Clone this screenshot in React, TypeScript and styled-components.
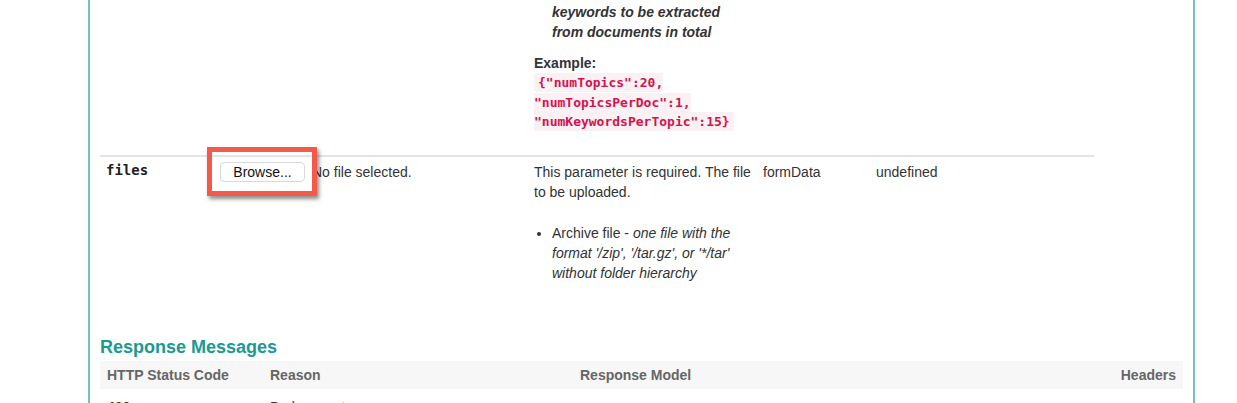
import React from 'react';
import styled, { createGlobalStyle } from 'styled-components';

const GlobalStyle = createGlobalStyle`
  html, body {
    margin: 0;
    padding: 0;
    overflow: hidden;
    background: #fff;
  }
  body {
    font-family: "Liberation Sans", Arial, Helvetica, sans-serif;
    font-size: 14px;
    line-height: 20px;
    color: #333;
  }
`;

const Operation = styled.div`
  margin-left: 88px;
  width: 1083px;
  min-height: 460px;
  border-left: 2px solid #72c3c0;
  border-right: 2px solid #72c3c0;
  padding: 2px 10px 0 10px;
`;

const ParamTable = styled.div`
  width: 994px;
`;

const ParamRow = styled.div<{ $divider?: boolean; $padTop: number; $padBottom: number }>`
  display: grid;
  grid-template-columns: 114px 314px 229px 113px 224px;
  align-items: start;
  padding: ${p => p.$padTop}px 0 ${p => p.$padBottom}px;
  border-top: ${p => (p.$divider ? '2px solid #e4e4e4' : 'none')};
`;

const Cell = styled.div`
  padding: 0 6px;
  min-width: 0;
`;

const ParamName = styled(Cell)`
  font-family: "DejaVu Sans Mono", Menlo, monospace;
  font-weight: bold;
  font-size: 14px;
  line-height: 16px;
  color: #222;
`;

const ListTail = styled.div`
  padding-left: 18px;
  font-weight: bold;
  font-style: italic;
`;

const ExampleLabel = styled.div`
  margin-top: 11px;
  font-weight: bold;
`;

const CodeBlock = styled.div`
  line-height: 18.5px;
`;

const Code = styled.code`
  font-family: "DejaVu Sans Mono", Menlo, monospace;
  font-size: 13px;
  font-weight: bold;
  color: #d3134d;
  background: #f9f1f3;
  padding: 2px 4px;
  border-radius: 3px;
`;

const FileField = styled.div`
  display: flex;
  align-items: center;
  gap: 7px;
  padding-left: 6px;
`;

const Highlight = styled.span`
  position: relative;
  display: inline-flex;

  &::after {
    content: '';
    position: absolute;
    top: -15px;
    bottom: -14px;
    left: -13px;
    right: -12px;
    border: 5px solid #f35a4a;
    box-shadow: 2px 3px 4px rgba(0, 0, 0, 0.45);
  }
`;

const BrowseButton = styled.button`
  height: 20px;
  width: 85px;
  padding: 0;
  font-family: "Liberation Sans", Arial, sans-serif;
  font-size: 14px;
  color: #111;
  background: #fff;
  border: 1px solid #d9d9d9;
  border-radius: 4px;
`;

const BulletList = styled.ul`
  margin: 21px 0 0;
  padding-left: 18px;

  li em {
    font-style: italic;
  }
`;

const SectionTitle = styled.h4`
  margin: 37px 0 3px;
  font-size: 18px;
  line-height: 22px;
  font-weight: bold;
  color: #1a9a91;
`;

const ResponseGrid = styled.div`
  display: grid;
  grid-template-columns: 163px 310px 1fr auto;
  padding: 0 7px;
  align-items: center;
`;

const ResponseHead = styled(ResponseGrid)`
  height: 28px;
  background: #f7f7f7;
  font-weight: bold;
  color: #666;
`;

const ResponseRow = styled(ResponseGrid)`
  padding-top: 8px;
  color: #333;
`;

const StatusCode = styled.span`
  font-weight: bold;
`;

export default function App() {
  return (
    <>
      <GlobalStyle />
      <Operation>
        <ParamTable>
          <ParamRow $padTop={0} $padBottom={23}>
            <Cell />
            <Cell />
            <Cell>
              <ListTail>
                keywords to be extracted
                <br />
                from documents in total
              </ListTail>
              <ExampleLabel>Example:</ExampleLabel>
              <CodeBlock>
                <Code>{'{"numTopics":20, "numTopicsPerDoc":1, "numKeywordsPerTopic":15}'}</Code>
              </CodeBlock>
            </Cell>
            <Cell />
            <Cell />
          </ParamRow>

          <ParamRow $divider $padTop={5} $padBottom={16}>
            <ParamName>files</ParamName>
            <FileField>
              <Highlight>
                <BrowseButton type="button">Browse...</BrowseButton>
              </Highlight>
              <span>No file selected.</span>
            </FileField>
            <Cell>
              <div>This parameter is required. The file to be uploaded.</div>
              <BulletList>
                <li>
                  Archive file - <em>one file with the format '/zip', '/tar.gz', or '*/tar' without folder hierarchy</em>
                </li>
              </BulletList>
            </Cell>
            <Cell>formData</Cell>
            <Cell>undefined</Cell>
          </ParamRow>
        </ParamTable>

        <SectionTitle>Response Messages</SectionTitle>
        <ResponseHead>
          <span>HTTP Status Code</span>
          <span>Reason</span>
          <span>Response Model</span>
          <span>Headers</span>
        </ResponseHead>
        <ResponseRow>
          <StatusCode>400</StatusCode>
          <span>Bad request</span>
          <span />
          <span />
        </ResponseRow>
      </Operation>
    </>
  );
}
